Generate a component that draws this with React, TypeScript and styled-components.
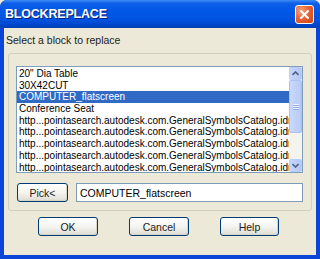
import React from 'react';
import styled, { createGlobalStyle } from 'styled-components';

const GlobalStyle = createGlobalStyle`
  html, body {
    margin: 0;
    padding: 0;
    background: #ece9d8;
  }
  * {
    box-sizing: border-box;
  }
`;

const Window = styled.div`
  width: 320px;
  height: 259px;
  display: flex;
  flex-direction: column;
  background: #0a45d8;
  border-radius: 7px 7px 0 0;
  overflow: hidden;
  font-family: 'Liberation Sans', Arial, sans-serif;
  font-size: 10px;
  color: #000;
`;

const TitleBar = styled.div`
  height: 28px;
  flex: none;
  display: flex;
  align-items: center;
  justify-content: space-between;
  padding: 0 6px 0 5px;
  background: linear-gradient(
    to bottom,
    #3d8cf6 0%,
    #0d5ee8 12%,
    #0058e6 40%,
    #0053e0 70%,
    #0046c8 90%,
    #003cb0 100%
  );
`;

const Title = styled.span`
  color: #fff;
  font-weight: bold;
  font-size: 12.5px;
  letter-spacing: -0.2px;
  text-shadow: 1px 1px 0 #0a1e7a;
`;

const CloseButton = styled.div`
  width: 19px;
  height: 19px;
  border: 1px solid #fff;
  border-radius: 3px;
  background: radial-gradient(circle at 30% 30%, #f5a07c 0%, #e45c2c 55%, #c8441b 100%);
  display: flex;
  align-items: center;
  justify-content: center;
`;

const Body = styled.div`
  flex: 1;
  margin: 0 4px 4px 4px;
  background: #ece9d8;
  display: flex;
  flex-direction: column;
  padding: 6px 4px 0 4px;
`;

const Prompt = styled.div`
  margin-left: -2px;
  height: 12px;
  line-height: 12px;
  color: #222;
  font-size: 10.5px;
`;

const GroupBox = styled.div`
  margin-top: 7px;
  height: 158px;
  border: 1px solid #d0d0bf;
  border-radius: 3px;
  padding: 12px 8px 0 7px;
  display: flex;
  flex-direction: column;
`;

const ListBox = styled.div`
  height: 107px;
  border: 1px solid #7f9db9;
  background: #fff;
  display: flex;
`;

const Rows = styled.div`
  flex: 1;
  overflow: hidden;
  padding-top: 1px;
`;

const Row = styled.div<{ $selected?: boolean }>`
  height: 11.7px;
  line-height: 11.7px;
  padding-left: 2px;
  white-space: nowrap;
  overflow: hidden;
  background: ${(p) => (p.$selected ? '#316ac5' : 'transparent')};
  color: ${(p) => (p.$selected ? '#fff' : '#000')};
`;

const ScrollBar = styled.div`
  width: 13px;
  flex: none;
  display: flex;
  flex-direction: column;
  background: #f4f3ee;
`;

const ScrollButton = styled.div`
  height: 13px;
  flex: none;
  border: 1px solid #b8cdf7;
  border-radius: 2px;
  background: linear-gradient(to right, #c6d6fb, #b4c8f6);
  display: flex;
  align-items: center;
  justify-content: center;
`;

const Thumb = styled.div`
  height: 53px;
  flex: none;
  border: 1px solid #a9c1f3;
  border-radius: 2px;
  background: linear-gradient(to right, #c9d9fc, #b8cbf7);
  display: flex;
  flex-direction: column;
  align-items: center;
  justify-content: center;
  gap: 1px;
`;

const Grip = styled.div`
  width: 6px;
  height: 1px;
  background: #eef3fe;
  box-shadow: 0 1px 0 #8faae6;
`;

const Track = styled.div`
  flex: 1;
`;

const PickRow = styled.div`
  margin-top: 10px;
  display: flex;
  align-items: center;
  gap: 8px;
  padding-left: 1px;
`;

const XpButton = styled.div<{ $width: number }>`
  width: ${(p) => p.$width}px;
  height: 19px;
  border: 1px solid #003c74;
  border-radius: 3px;
  background: linear-gradient(to bottom, #ffffff 0%, #f4f4f0 50%, #e3e2da 90%, #d6d0c5 100%);
  display: flex;
  align-items: center;
  justify-content: center;
  color: #222;
  font-size: 10.5px;
  box-shadow: inset -1px -1px 0 #d8d4c8;
`;

const TextField = styled.div`
  flex: 1;
  height: 19px;
  border: 1px solid #7f9db9;
  background: #fff;
  display: flex;
  align-items: center;
  padding-left: 3px;
  font-size: 10.5px;
`;

const ButtonRow = styled.div`
  margin-top: 6px;
  display: flex;
  gap: 31px;
  padding-left: 30px;
`;

const items = [
  '20" Dia Table',
  '30X42CUT',
  'COMPUTER_flatscreen',
  'Conference Seat',
  'http...pointasearch.autodesk.com.GeneralSymbolsCatalog.idrop',
  'http...pointasearch.autodesk.com.GeneralSymbolsCatalog.idrop',
  'http...pointasearch.autodesk.com.GeneralSymbolsCatalog.idrop',
  'http...pointasearch.autodesk.com.GeneralSymbolsCatalog.idrop',
  'http...pointasearch.autodesk.com.GeneralSymbolsCatalog.idrop',
];

const Arrow = ({ up }: { up?: boolean }) => (
  <svg width="7" height="5" viewBox="0 0 7 5">
    <path
      d={up ? 'M0.5 4 L3.5 1 L6.5 4' : 'M0.5 1 L3.5 4 L6.5 1'}
      fill="none"
      stroke="#4d6185"
      strokeWidth="1.6"
    />
  </svg>
);

const App = () => {
  return (
    <>
      <GlobalStyle />
      <Window>
        <TitleBar>
          <Title>BLOCKREPLACE</Title>
          <CloseButton>
            <svg width="11" height="11" viewBox="0 0 11 11">
              <path d="M2 2 L9 9 M9 2 L2 9" stroke="#fff" strokeWidth="2" strokeLinecap="round" />
            </svg>
          </CloseButton>
        </TitleBar>
        <Body>
          <Prompt>Select a block to replace</Prompt>
          <GroupBox>
            <ListBox>
              <Rows>
                {items.map((item, i) => (
                  <Row key={i} $selected={i === 2}>
                    {item}
                  </Row>
                ))}
              </Rows>
              <ScrollBar>
                <ScrollButton>
                  <Arrow up />
                </ScrollButton>
                <Thumb>
                  <Grip />
                  <Grip />
                  <Grip />
                </Thumb>
                <Track />
                <ScrollButton>
                  <Arrow />
                </ScrollButton>
              </ScrollBar>
            </ListBox>
            <PickRow>
              <XpButton $width={51}>Pick&lt;</XpButton>
              <TextField>COMPUTER_flatscreen</TextField>
            </PickRow>
          </GroupBox>
          <ButtonRow>
            <XpButton $width={60}>OK</XpButton>
            <XpButton $width={60}>Cancel</XpButton>
            <XpButton $width={59}>Help</XpButton>
          </ButtonRow>
        </Body>
      </Window>
    </>
  );
};

export default App;
